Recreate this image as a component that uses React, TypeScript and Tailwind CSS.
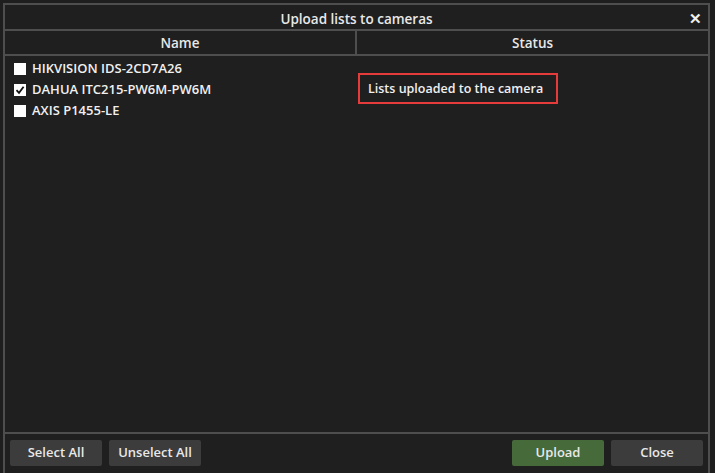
import React from "react";

const font = { fontFamily: '"Open Sans", "Noto Sans", "Liberation Sans", sans-serif' };

function Check({ checked }: { checked?: boolean }) {
  return (
    <div className="w-[12px] h-[12px] bg-white flex items-center justify-center">
      {checked && (
        <svg width="10" height="10" viewBox="0 0 10 10">
          <path d="M1.5 5.2 L4 7.8 L8.6 1.8" stroke="#111" strokeWidth="1.8" fill="none" />
        </svg>
      )}
    </div>
  );
}

export default function App() {
  const rows = [
    { name: "HIKVISION IDS-2CD7A26", checked: false },
    { name: "DAHUA ITC215-PW6M-PW6M", checked: true },
    { name: "AXIS P1455-LE", checked: false },
  ];
  return (
    <div className="w-[715px] h-[473px] bg-[#1e1e1e] pt-[3px] pl-[3px] pr-[5px] overflow-hidden" style={font}>
      <div className="h-[470px] border-l-2 border-t-2 border-r-2 border-[#4e4e4e] flex flex-col bg-[#1f1f1f]">
        <div className="h-[26px] flex items-center relative border-b-2 border-[#4e4e4e] pt-[4px]">
          <div className="flex-1 text-center text-[13.5px] text-[#e8e8e8] font-semibold">Upload lists to cameras</div>
          <div className="absolute right-[6px] top-[2px] text-[#f0f0f0] text-[15px] font-bold">✕</div>
        </div>
        <div className="h-[25px] flex border-b-2 border-[#4e4e4e] text-[13.5px] text-[#e8e8e8] font-semibold">
          <div className="w-[352px] border-r-2 border-[#4e4e4e] flex items-center justify-center pt-[2px]">Name</div>
          <div className="flex-1 flex items-center justify-center pt-[2px]">Status</div>
        </div>
        <div className="flex-1 flex">
          <div className="w-[353px] flex flex-col pt-[2px] pl-[9px]">
            {rows.map((r) => (
              <div key={r.name} className="h-[21px] flex items-center gap-[6px]">
                <Check checked={r.checked} />
                <span className="text-[13px] text-[#f0f0f0] font-semibold">{r.name}</span>
              </div>
            ))}
          </div>
          <div className="flex-1 pt-[17px]">
            <div className="w-[200px] h-[31px] border-2 border-[#e53b3b] flex items-center pl-[8px] pt-[1px] text-[12.5px] text-[#f0f0f0] font-semibold">
              Lists uploaded to the camera
            </div>
          </div>
        </div>
        <div className="h-[41px] border-t-2 border-[#4e4e4e] flex items-center px-[5px] pb-[2px] text-[13px] text-[#e8e8e8] font-semibold">
          <button className="w-[92px] h-[26px] bg-[#3c3c3c] rounded-[2px]">Select All</button>
          <button className="ml-[7px] w-[92px] h-[26px] bg-[#3c3c3c] rounded-[2px]">Unselect All</button>
          <div className="flex-1" />
          <button className="w-[92px] h-[26px] bg-[#466a3a] rounded-[2px]">Upload</button>
          <button className="ml-[7px] w-[92px] h-[26px] bg-[#3c3c3c] rounded-[2px]">Close</button>
        </div>
      </div>
    </div>
  );
}
